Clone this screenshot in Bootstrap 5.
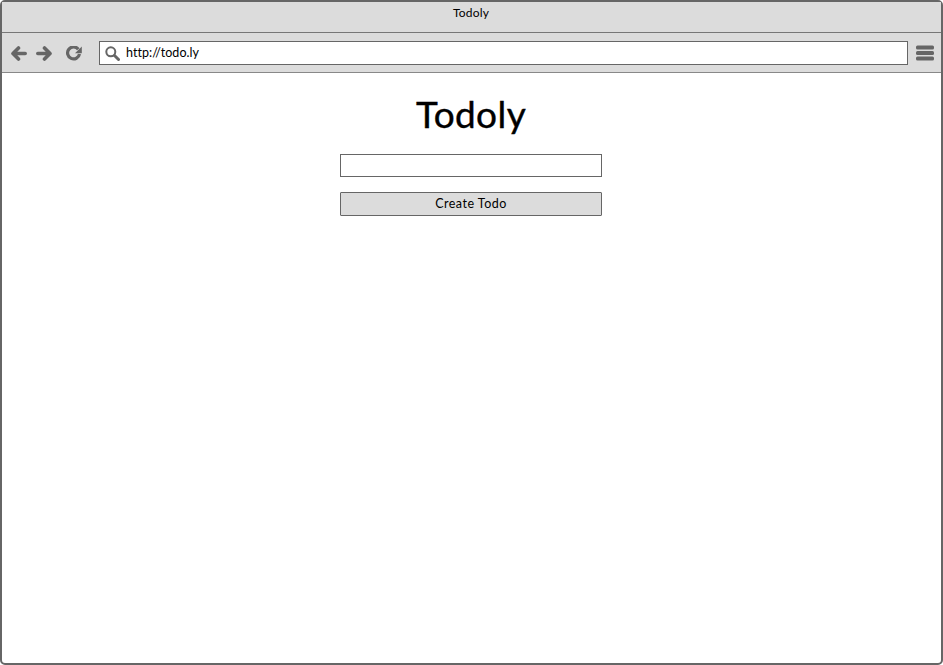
<!DOCTYPE html>
<html lang="en">
<head>
    <meta charset="UTF-8">
    <title>Todoly</title>
    <meta name="viewport" content="width=device-width, initial-scale=1">
    <link href="https://cdn.jsdelivr.net/npm/bootstrap@5.3.0/dist/css/bootstrap.min.css" rel="stylesheet">
    <style>
        html, body { height: 100%; }
        body { font-family: "Lato", "Liberation Sans", sans-serif; color: #000; background: #fff; overflow: hidden; }
        .browser-frame { height: 665px; border: 2px solid #666; border-radius: 5px; }
        .title-strip { height: 31px; background: #dcdcdc; border-bottom: 1px solid #777; font-size: 12px; line-height: 22px; letter-spacing: .2px; padding-right: 1px; }
        .tool-strip { height: 40px; background: #dcdcdc; border-bottom: 1px solid #888; padding: 1px 7px 0 9px; }
        .tool-icon { display: block; flex: none; }
        .icon-gap-sm { margin-left: 9px; }
        .icon-gap-md { margin-left: 14px; }
        .address-box { height: 24px; margin: 0 8px 0 17px; background: #fff; border: 1px solid #666; font-size: 12.5px; padding-left: 5px; gap: 6px; letter-spacing: .05px; }
        .address-box span { padding-top: 1px; }
        .page-content { padding-right: 1px; }
        .page-title { font-size: 37px; font-weight: 400; line-height: 47px; margin: 17px 0 17px; letter-spacing: .4px; -webkit-text-stroke: .4px #000; }
        .todo-form { width: 262px; }
        .todo-input { height: 23px; border: 1px solid #666; border-radius: 0; padding: 0 4px; margin-bottom: 15px; }
        .todo-btn { height: 24px; padding: 0; background: #dcdcdc; border: 1px solid #666; border-radius: 1px; font-size: 12.5px; letter-spacing: .5px; color: #000; }
    </style>
</head>
<body>

<div class="browser-frame d-flex flex-column">
    <div class="title-strip text-center">Todoly</div>

    <div class="tool-strip d-flex align-items-center">
        <svg class="tool-icon" width="16" height="15" viewBox="0 0 16 15" fill="none" stroke="#666" stroke-width="3.600" stroke-linecap="round" stroke-linejoin="round"><path d="M7.500 2L2 7.500 7.500 13M3 7.500H14.200"/></svg>
        <svg class="tool-icon icon-gap-sm" width="16" height="15" viewBox="0 0 16 15" fill="none" stroke="#666" stroke-width="3.600" stroke-linecap="round" stroke-linejoin="round"><path d="M8.500 2L14 7.500 8.500 13M13 7.500H1.800"/></svg>
        <svg class="tool-icon icon-gap-md" width="16" height="15" viewBox="0 0 16 15"><path d="M12.300 3.200A6 6 0 1 0 13.500 8" fill="none" stroke="#666" stroke-width="3.200"/><path d="M15.800 0.500V7.300H9z" fill="#666"/></svg>
        <div class="address-box flex-grow-1 d-flex align-items-center">
            <svg class="tool-icon" width="15" height="15" viewBox="0 0 15 15" fill="none" stroke="#666"><circle cx="5.800" cy="5.800" r="4.500" stroke-width="2"/><path d="M9.500 9.500l4 4" stroke-width="3" stroke-linecap="round"/></svg>
            <span>http://todo.ly</span>
        </div>
        <svg class="tool-icon" width="18" height="16" viewBox="0 0 18 16" fill="#666"><rect y="0.500" width="18" height="4" rx="1.500"/><rect y="6" width="18" height="4" rx="1.500"/><rect y="11.500" width="18" height="4" rx="1.500"/></svg>
    </div>

    <div class="page-content d-flex flex-column align-items-center flex-grow-1">
        <h1 class="page-title">Todoly</h1>
        <form class="todo-form d-flex flex-column">
            <input type="text" class="form-control todo-input">
            <button type="button" class="btn todo-btn">Create Todo</button>
        </form>
    </div>
</div>

<script src="https://cdn.jsdelivr.net/npm/bootstrap@5.3.0/dist/js/bootstrap.bundle.min.js"></script>
</body>
</html>
